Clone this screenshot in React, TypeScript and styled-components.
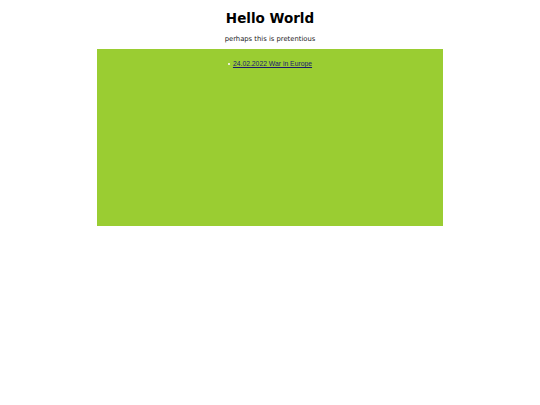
import { createGlobalStyle, styled } from "styled-components";

const GlobalStyle = createGlobalStyle`
  html, body {
    margin: 0;
    padding: 0;
    background: #ffffff;
  }
`;

const Page = styled.div`
  display: flex;
  flex-direction: column;
  align-items: center;
  padding-top: 9px;
`;

const Title = styled.h1`
  margin: 0;
  font-family: "DejaVu Sans", sans-serif;
  font-size: 13.5px;
  font-weight: 700;
  line-height: 18px;
  color: #000000;
`;

const Subtitle = styled.p`
  margin: 8px 0 0 0;
  font-family: "DejaVu Sans", sans-serif;
  font-size: 6.8px;
  line-height: 9px;
  color: #222222;
`;

const Panel = styled.div`
  width: 346px;
  height: 177px;
  margin-top: 5px;
  background: #9acd32;
  display: flex;
  justify-content: center;
  padding-top: 10px;
  box-sizing: border-box;
`;

const List = styled.ul`
  margin: 0;
  padding: 0;
  list-style: none;
`;

const Item = styled.li`
  display: flex;
  align-items: center;
  gap: 3px;
  font-family: "Liberation Sans", Arial, sans-serif;
  font-size: 6.8px;
  line-height: 9px;

  &::before {
    content: "";
    width: 2px;
    height: 2px;
    background: #e8f0d0;
  }
`;

const Link = styled.a`
  color: #1a1a6e;
  text-decoration: underline;
`;

export default function App() {
  return (
    <>
      <GlobalStyle />
      <Page>
        <Title>Hello World</Title>
        <Subtitle>perhaps this is pretentious</Subtitle>
        <Panel>
          <List>
            <Item>
              <Link href="#">24.02.2022 War in Europe</Link>
            </Item>
          </List>
        </Panel>
      </Page>
    </>
  );
}
